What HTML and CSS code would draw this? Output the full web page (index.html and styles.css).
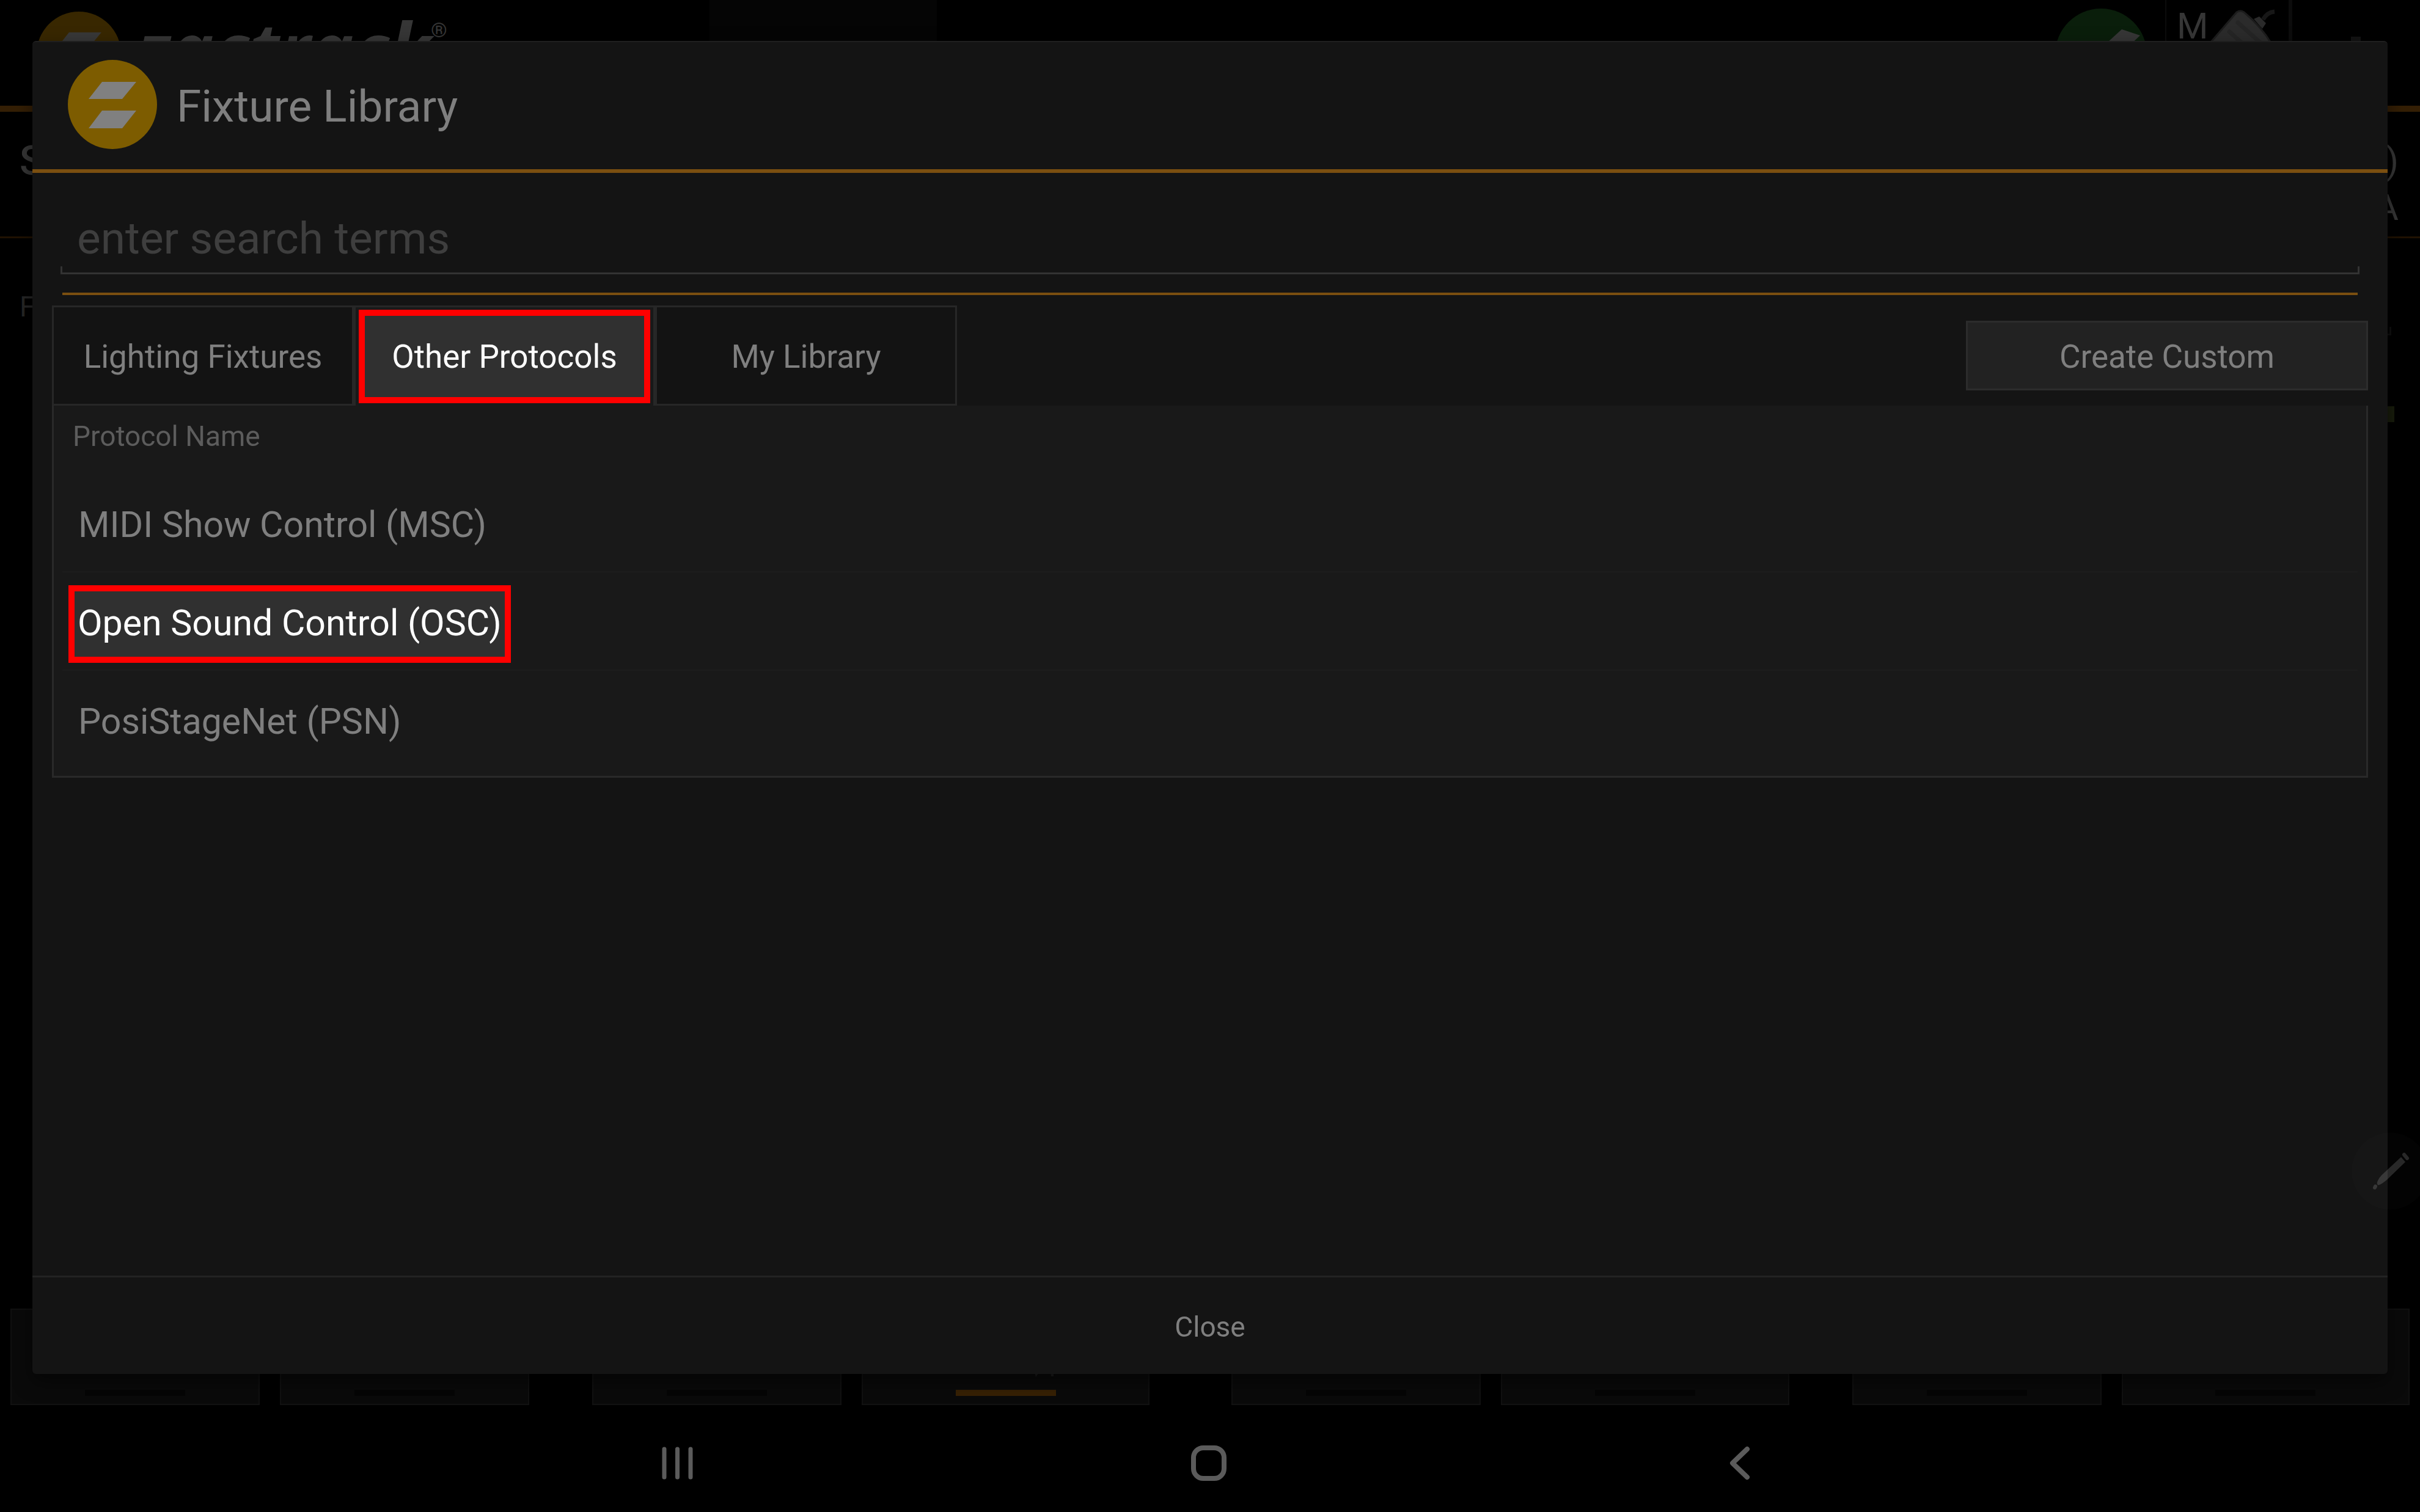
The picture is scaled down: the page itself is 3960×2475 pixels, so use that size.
FILE: index.html
```html
<!DOCTYPE html>
<html lang="en">
<head>
<meta charset="utf-8">
<meta name="viewport" content="width=device-width, initial-scale=1">
<title>Fixture Library</title>
<link rel="stylesheet" href="styles.css">
</head>
<body>
<div class="app">
  <div class="topbar">
    <div class="brand">
      <svg class="brand-mark" viewBox="0 0 146 146" aria-hidden="true">
        <circle cx="73" cy="73" r="73" fill="#382700"/>
        <path d="M56 36H112L89 64H34ZM56 83H112L89 112H34Z" fill="#383838"/>
      </svg>
      <span class="wordmark">zactrack</span><span class="registered">®</span>
    </div>
    <div class="topbar-tab"></div>
    <div class="status">
      <svg class="status-dot" viewBox="0 0 150 150" aria-hidden="true">
        <circle cx="75" cy="75" r="75" fill="#0a1e0b"/>
        <path d="M86 55L109 34L139 44L118 64Z" fill="#363636"/>
      </svg>
      <div class="source">
        <span>M</span>
        <svg class="source-icon" viewBox="0 0 112 110" aria-hidden="true">
          <path d="M46 5Q52 1 58 5Q86 28 104 58L60 104L2 56Z" fill="#2b2b2b" stroke="#1c1c1c" stroke-width="3"/>
          <path d="M48 22L86 56M34 37L60 60" stroke="#252525" stroke-width="7" stroke-linecap="round"/>
          <path d="M74 16L83 12L94 23L88 32Z" fill="#2a2a2a"/>
          <path d="M89 17Q96 5 108 4" fill="none" stroke="#171717" stroke-width="7"/>
        </svg>
      </div>
      <div class="more"></div>
    </div>
  </div>
  <div class="subbar"><span class="subbar-title">S</span><span class="subbar-info"><span>)</span><span>A</span></span></div>
  <div class="stage"><span class="stage-label">F</span><div class="stage-edge"><i class="stage-field"></i><i class="stage-chip"></i></div></div>
  <div class="modes">
    <div class="mode"><i></i></div>
    <div class="mode"><i></i></div>
    <div class="mode mode-group"><i></i></div>
    <div class="mode mode-wide mode-active">
      <svg class="mode-caption" viewBox="0 0 40 8" aria-hidden="true"><path d="M3 0H10L5 7ZM29 0H34V6H30Z" fill="#1c1c1c"/></svg>
      <i></i>
    </div>
    <div class="mode mode-center"><i></i></div>
    <div class="mode mode-wide"><i></i></div>
    <div class="mode mode-group"><i></i></div>
    <div class="mode mode-wide"><i></i></div>
  </div>
  <nav class="system-nav">
    <button type="button" aria-label="Recent apps"><svg viewBox="0 0 60 60"><path d="M8 7V53M29.500 7V53M51 7V53" stroke-width="7"/></svg></button>
    <button type="button" aria-label="Home"><svg viewBox="0 0 60 60"><rect x="5" y="5" width="50" height="50" rx="16" stroke-width="8"/></svg></button>
    <button type="button" aria-label="Back"><svg viewBox="0 0 60 60"><path d="M42 7L18 30L42 53" stroke-width="8"/></svg></button>
  </nav>
</div>

<main class="dialog" role="dialog" aria-labelledby="dialog-title">
  <header class="dialog-head">
    <svg class="dialog-logo" viewBox="0 0 146 146" aria-hidden="true">
      <circle cx="73" cy="73" r="73" fill="#7d5c00"/>
      <path d="M56 36H112L89 64H34ZM56 83H112L89 112H34Z" fill="#808080"/>
    </svg>
    <h1 id="dialog-title">Fixture Library</h1>
  </header>
  <div class="dialog-body">
    <div class="search"><input type="text" aria-label="Search" placeholder="enter search terms"></div>
    <div class="toolbar">
      <div class="tabs" role="tablist">
        <button type="button" role="tab" class="tab">Lighting Fixtures</button>
        <button type="button" role="tab" class="tab tab-selected" aria-selected="true"><span class="marked">Other Protocols</span></button>
        <button type="button" role="tab" class="tab">My Library</button>
      </div>
      <button type="button" class="create">Create Custom</button>
    </div>
    <section class="panel">
      <h2>Protocol Name</h2>
      <ul class="protocols">
        <li><button type="button">MIDI Show Control (MSC)</button></li>
        <li class="current"><button type="button" class="marked">Open Sound Control (OSC)</button></li>
        <li><button type="button">PosiStageNet (PSN)</button></li>
      </ul>
    </section>
  </div>
  <button type="button" class="close">Close</button>
</main>

<button type="button" class="pen" aria-label="Pen menu">
  <svg viewBox="0 0 126 126" aria-hidden="true">
    <circle cx="63" cy="63" r="63" fill="#fff" fill-opacity=".012"/>
    <path d="M81 40L88 48L58 77Q50 84 44 86Q41 85 42 81Q45 73 52 67Z" fill="#fff" fill-opacity=".15"/>
    <path d="M86 36L91 42M39 88L38 90" stroke="#fff" stroke-opacity=".15" stroke-width="6" stroke-linecap="round"/>
  </svg>
</button>
</body>
</html>
```
FILE: styles.css
```css
* { box-sizing: border-box; }

body {
  margin: 0;
  background: #000;
  color: #7f7f7f;
  font-family: Roboto, "Noto Sans", sans-serif;
  overflow: hidden;
}

button {
  margin: 0;
  padding: 0;
  border: 0;
  background: none;
  color: inherit;
  font: inherit;
}

h1, h2 { margin: 0; font-weight: 400; }

/* App behind the dialog */
.app {
  display: flex;
  flex-direction: column;
  height: 100vh;
  color: #363636;
}

.topbar {
  display: flex;
  justify-content: space-between;
  height: 183px;
  border-bottom: 10px solid #341f05;
}

.brand {
  display: flex;
  align-items: flex-start;
  width: 1161px;
  padding: 19px 0 0 60px;
}

.brand-mark { width: 138px; height: 138px; margin-right: 26px; }

.wordmark {
  font: italic 700 120px/120px "Open Sans", sans-serif;
}

.registered { padding-top: 10px; font-size: 34px; line-height: 40px; }

.topbar-tab { width: 372px; background: #050505; }

.status {
  display: flex;
  flex: 1;
  justify-content: flex-end;
}

.status-dot { width: 150px; height: 150px; margin: 14px 30px 0 0; }

.source {
  display: flex;
  width: 208px;
  padding: 8px 0 0 17px;
  border-left: 2px solid #0c0c0c;
  border-right: 6px solid #0c0c0c;
  font-size: 59px;
  line-height: 70px;
}

.source-icon { width: 112px; height: 110px; margin-top: 7px; }

.more { width: 209px; }

.more::before {
  content: "";
  display: block;
  width: 16px;
  height: 16px;
  margin: 60px 0 0 96px;
  background: #131313;
}

.subbar {
  display: flex;
  justify-content: space-between;
  height: 207px;
  padding: 43px 35px 0 32px;
  border-bottom: 3px solid #201202;
  font-size: 59px;
}

.subbar-title { font-size: 66px; line-height: 76px; font-weight: 500; }

.subbar-info {
  display: flex;
  flex-direction: column;
  align-items: flex-end;
  line-height: 76px;
}

.stage {
  display: flex;
  flex: 1;
  justify-content: space-between;
  padding: 85px 42px 0 32px;
  color: #262626;
  font-size: 46px;
}

.stage-edge { display: flex; flex-direction: column; align-items: flex-end; gap: 116px; padding-top: 60px; }

.stage-field { width: 30px; height: 14px; margin-right: 5px; border: solid #0f0f0f; border-width: 0 3px 3px 0; }

.stage-chip { width: 40px; height: 26px; background: #181c0c; }

.modes { display: flex; gap: 33px; padding: 0 17px; }

.mode {
  display: flex;
  flex: 407;
  flex-direction: column;
  align-items: center;
  justify-content: flex-end;
  height: 158px;
  padding-bottom: 13px;
  border: 2px solid #111;
  background: #0a0a0a;
}

.mode-wide { flex: 471; }
.mode-group { margin-left: 70px; }
.mode-center { margin-left: 101px; }
.mode i { width: 164px; height: 10px; background: #050505; }
.mode-active i { background: #372104; }
.mode-caption { width: 40px; height: 8px; margin: 0 0 20px 128px; }

.system-nav {
  display: flex;
  justify-content: center;
  gap: 809px;
  height: 175px;
  padding: 15px 5px 0 0;
}

.system-nav svg {
  display: block;
  width: 60px;
  height: 60px;
  fill: none;
  stroke: #5b5b5b;
  stroke-linecap: round;
  stroke-linejoin: round;
}

/* Dialog, laid over the app */
.dialog {
  position: fixed;
  inset: 67px 53px 226px;
  display: flex;
  flex-direction: column;
  border-top: 2px solid #1f1f1f;
  border-radius: 6px;
  background: #141414;
  box-shadow: 0 12px 30px rgba(0, 0, 0, .5);
}

.dialog-head {
  display: flex;
  align-items: center;
  gap: 32px;
  height: 214px;
  padding: 0 58px 4px;
  border-bottom: 6px solid #7b4f10;
}

.dialog-logo { width: 146px; height: 146px; }

h1 { padding-top: 6px; font-size: 73px; line-height: 88px; }

.dialog-body { flex: 1; padding: 0 32px; }

.search {
  margin: 0 17px 17px;
  padding: 61px 0 30px;
  border-bottom: 4px solid #7b4f10;
}

.search input {
  display: block;
  width: calc(100% + 6px);
  height: 105px;
  margin: 0 -3px;
  padding: 0 24px 10px;
  border: solid transparent;
  border-width: 0 3px 3px;
  border-bottom-color: #333;
  border-radius: 0;
  background:
    linear-gradient(#333, #333) left bottom / 3px 13px no-repeat border-box,
    linear-gradient(#333, #333) right bottom / 3px 13px no-repeat border-box;
  color: #7f7f7f;
  font: 73px/88px Roboto, sans-serif;
  outline: 0;
}

.search input::placeholder { color: #3e3e3e; opacity: 1; }

.toolbar {
  display: flex;
  align-items: center;
  justify-content: space-between;
  font-size: 53px;
  line-height: 64px;
}

.tabs { display: flex; }

.tab {
  width: 494px;
  height: 164px;
  padding-top: 3px;
  border: 3px solid #272727;
  background: #131313;
}

.tab-selected {
  display: flex;
  width: 493px;
  padding: 4px 5px;
  border-bottom: 0;
  background: #191919;
}

.marked {
  border: 10px solid #f00;
  background: #303030;
  color: #fff;
}

.tab-selected .marked {
  flex: 1;
  align-self: stretch;
  line-height: 135px;
}

.create {
  width: 658px;
  height: 114px;
  padding-top: 3px;
  border: 3px solid #2c2c2c;
  background: #222;
}

.panel {
  padding: 0 14px 11px;
  border: solid #292929;
  border-width: 0 3px 3px;
  background: #191919;
}

h2 {
  padding: 22px 17px 34px;
  color: #5c5c5c;
  font-size: 46px;
  line-height: 56px;
}

.protocols { margin: 0; padding: 0; list-style: none; }

.protocols li {
  display: flex;
  align-items: center;
  height: 161px;
  padding: 6px 26px 0;
  border-bottom: 2px solid #1d1d1d;
  font-size: 59px;
  line-height: 70px;
}

.protocols li:last-child { border-bottom-color: transparent; }
.protocols .current { padding: 10px 10px 0; }

.protocols .marked { height: 127px; padding: 0 5px 4px; }

.close {
  height: 161px;
  padding-top: 3px;
  border-top: 3px solid #232323;
  font-size: 46px;
  line-height: 56px;
}

/* Floating pen handle over the right edge */
.pen {
  position: fixed;
  right: -14px;
  bottom: 495px;
}

.pen svg { display: block; width: 126px; height: 126px; }
```
